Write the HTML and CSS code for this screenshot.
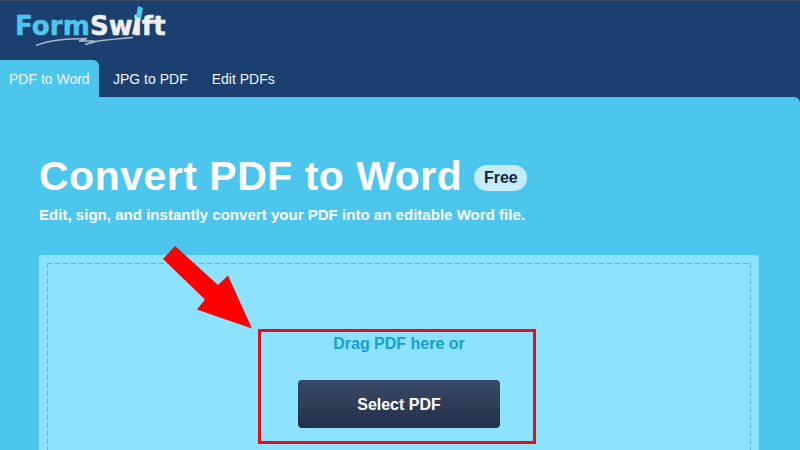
FILE: index.html
```html
<!DOCTYPE html>
<html lang="en">
<head>
<meta charset="utf-8">
<title>Convert PDF to Word</title>
<link rel="stylesheet" href="styles.css">
</head>
<body>
<header class="header">
  <div class="logo">
    <span class="logo-form">Form</span><span class="logo-swift">Swift</span>
    <svg class="logo-swoosh" width="100" height="12" viewBox="0 0 100 12"><path d="M1 10.500C14 5 34 3.500 52 3.500L44 6L60 6L50 9.500L63 6C74 4.500 86 3.500 98 2.500" fill="none" stroke="#a9b7c8" stroke-width="1.500"/></svg>
    <svg class="logo-pen" width="14" height="30" viewBox="0 0 14 30"><path d="M8 0L13 2L11 13L6 11Z" fill="#4ec5ee"/><path d="M6 11L11 13L4 29L2 28Z" fill="#eef1f4"/></svg>
  </div>
  <nav class="tabs">
    <a class="tab tab-active">PDF to Word</a>
    <a class="tab tab-first">JPG to PDF</a>
    <a class="tab">Edit PDFs</a>
  </nav>
</header>
<main class="panel">
  <div class="title-row">
    <h1 class="title">Convert PDF to Word</h1>
    <span class="badge">Free</span>
  </div>
  <p class="subtitle">Edit, sign, and instantly convert your PDF into an editable Word file.</p>
  <section class="drop">
    <div class="drop-inner">
      <p class="drag">Drag PDF here or</p>
      <button class="select">Select PDF</button>
    </div>
  </section>
</main>
<div class="red-box"></div>
<svg class="arrow" width="100" height="90" viewBox="0 0 100 90"><path d="M175 246L163 259L205 299.500L197 309.500L252 328.500L228 275.500L218 285Z" transform="translate(-160 -246)" fill="#ff0000"/></svg>
</body>
</html>
```
FILE: styles.css
```css
* { box-sizing: border-box; }
html, body { margin: 0; height: 450px; overflow: hidden; }
body {
  position: relative;
  width: 800px;
  background: #1b3f6e;
  font-family: "Liberation Sans", Arial, sans-serif;
  color: #fff;
}
.header {
  height: 97px;
  background: #1b3f6e;
  border-top: 1px solid #3b4a6b;
  display: flex;
  flex-direction: column;
  justify-content: space-between;
}
.logo {
  position: relative;
  margin: 10px 0 0 15px;
  width: 160px;
  height: 30px;
  font-family: "DejaVu Sans", sans-serif;
  font-size: 26px;
  font-weight: 700;
  line-height: 30px;
  letter-spacing: 0.100px;
  -webkit-text-stroke: 0.500px currentColor;
  white-space: nowrap;
}
.logo-form { color: #4ec5ee; }
.logo-swift { color: #eef1f4; }
.logo-swoosh { position: absolute; left: 20px; top: 24px; }
.logo-pen { position: absolute; left: 115px; top: -5px; }
.tabs { display: flex; height: 37px; }
.tab {
  padding: 1px 12px 0;
  font-size: 14px;
  line-height: 37px;
  color: #f0f6fb;
}
.tab-active {
  width: 99px;
  padding: 1px 0 0 9px;
  background: #4dc6ee;
  border-radius: 0 6px 0 0;
}
.tab-first { margin-left: 2px; }
.panel {
  height: 353px;
  padding: 56px 41px 0 39px;
  background: #4dc6ee;
  border-radius: 0 6px 0 0;
}
.title-row { display: flex; align-items: center; height: 46px; gap: 12px; }
.title { margin: 0; font-size: 41px; font-weight: 700; line-height: 46px; letter-spacing: 0.500px; }
.badge {
  margin-top: 4px;
  width: 53px;
  height: 26px;
  border-radius: 13px;
  background: #c4ecfb;
  color: #10233f;
  font-size: 16px;
  font-weight: 700;
  line-height: 26px;
  text-align: center;
}
.subtitle { margin: 6px 0 0; font-size: 15px; font-weight: 700; line-height: 20px; letter-spacing: 0.030px; }
.drop {
  margin-top: 30px;
  height: 210px;
  padding: 8px;
  background: #8ce2ff;
  border-radius: 4px 4px 0 0;
}
.drop-inner {
  height: 100%;
  background:
    repeating-linear-gradient(90deg, #55b8d6 0 5px, transparent 5px 8px) top left / 100% 1px no-repeat,
    repeating-linear-gradient(180deg, #55b8d6 0 5px, transparent 5px 8px) top left / 1px 100% no-repeat,
    repeating-linear-gradient(180deg, #55b8d6 0 5px, transparent 5px 8px) top right / 1px 100% no-repeat;
  display: flex;
  flex-direction: column;
  align-items: center;
}
.drag { margin: 71px 0 0; font-size: 16px; font-weight: 700; line-height: 20px; color: #12a0cf; }
.select {
  margin-top: 26px;
  width: 202px;
  height: 48px;
  padding: 1px 0 0;
  border: 0;
  border-radius: 4px;
  background: linear-gradient(#3a4a66, #232f48);
  color: #fff;
  font-family: inherit;
  font-size: 16px;
  font-weight: 700;
}
.red-box {
  position: absolute;
  left: 258px;
  top: 329px;
  width: 278px;
  height: 115px;
  border: 3px solid #e01018;
}
.arrow { position: absolute; left: 160px; top: 246px; }
```
